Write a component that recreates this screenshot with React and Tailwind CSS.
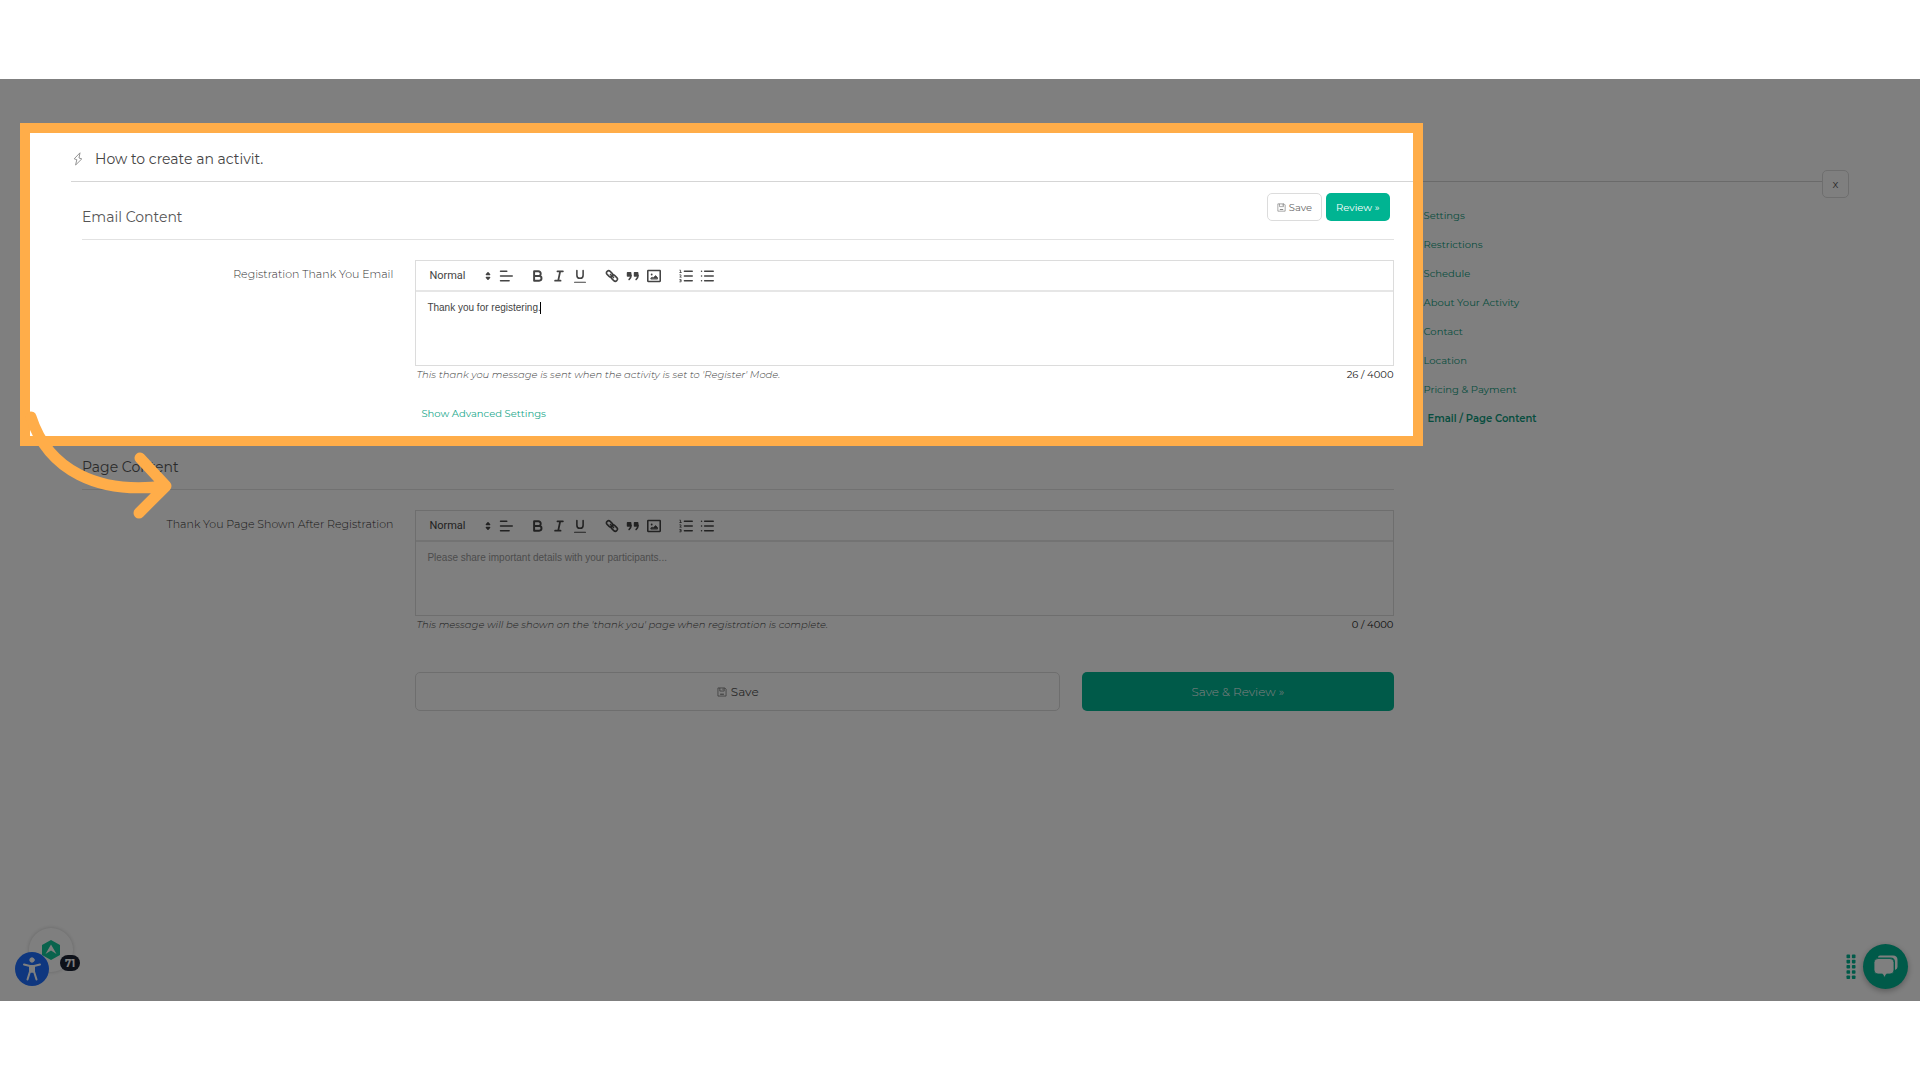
function FloppyIcon({ className }) {
  return (
    <svg viewBox="0 0 16 16" className={className} fill="none" stroke="currentColor" strokeWidth="1" aria-hidden="true">
      <path d="M1.5 1.5h11l2 2v11h-13z" />
      <path d="M4.5 1.5v5h7v-5M9.5 2.5v2" />
      <path d="M5 11.5h6" strokeWidth="1.4" />
    </svg>
  )
}

function BoltIcon() {
  return (
    <svg viewBox="0 0 12 14" className="h-3.5 w-3" fill="none" stroke="#888" strokeWidth="0.9" strokeLinejoin="round" aria-hidden="true">
      <path d="M8 .8 2.2 6.8l2.6.9L3.6 13 9.8 6.9 7 6z" />
    </svg>
  )
}

function Tool({ label, wide, children }) {
  return (
    <button type="button" aria-label={label} className={wide ? 'mr-[11px] flex h-6 w-[21px] items-center justify-center' : 'flex h-6 w-[21px] items-center justify-center'}>
      <svg viewBox="0 0 18 18" className="size-[14px]" fill="none" stroke="#444" strokeWidth="2" strokeLinecap="round" strokeLinejoin="round" aria-hidden="true">
        {children}
      </svg>
    </button>
  )
}

function Toolbar() {
  return (
    <div className="flex h-[31px] items-center border-b-2 border-[#e6e6e6] pl-[13px]">
      <div className="relative mr-1 flex w-[62px] items-center">
        <select aria-label="Text style" className="h-5 w-full appearance-none bg-transparent font-['Roboto','Liberation_Sans',sans-serif] text-[11px] leading-5 text-[#444] outline-none">
          <option>Normal</option>
        </select>
        <svg viewBox="0 0 18 18" className="pointer-events-none absolute -right-1 size-[14px]" fill="#444" stroke="#444" strokeWidth="2" strokeLinejoin="round" aria-hidden="true">
          <path d="M7 11l2 2 2-2zM7 7l2-2 2 2z" />
        </svg>
      </div>
      <Tool label="Align" wide>
        <path d="M2 9h15M2 15h11M2 3h8" />
      </Tool>
      <Tool label="Bold">
        <g strokeWidth="2.5">
          <path d="M4 3h5.500A3 3 0 0 1 12.500 6 3 3 0 0 1 9.500 9H4zM4 9h6.500A3 3 0 0 1 13.500 12 3 3 0 0 1 10.500 15H4z" />
        </g>
      </Tool>
      <Tool label="Italic">
        <path d="M7 3h7M4 15h7M8 15l2.500-12" strokeWidth="2.300" />
      </Tool>
      <Tool label="Underline" wide>
        <path d="M5 2v6a4 4 0 0 0 8 0V2" />
        <path d="M2 17h14" strokeWidth="1.500" />
      </Tool>
      <Tool label="Link">
        <rect x="1.500" y="3.500" width="9" height="5.500" rx="2.700" transform="rotate(45 6 6.200)" />
        <rect x="7.500" y="9" width="9" height="5.500" rx="2.700" transform="rotate(45 12 11.700)" />
        <path d="M7 7l4 4" />
      </Tool>
      <Tool label="Quote">
        <path d="M2 5h4v4H2zM11 5h4v4h-4z" fill="#444" />
        <path d="M6.500 8c0 3-.8 4.500-2.500 5.500M15.500 8c0 3-.8 4.500-2.500 5.500" />
      </Tool>
      <Tool label="Image" wide>
        <rect x="1" y="2" width="16" height="14" rx="0.500" />
        <circle cx="6" cy="7" r="1.200" fill="#444" stroke="none" />
        <path d="M5 12.500v-1l2-1 1 1 3-3 2.500 2.500v1.500z" fill="#444" strokeWidth="1" />
      </Tool>
      <Tool label="Numbered list">
        <path d="M7 3h10M7 9h10M7 15h10" />
        <path d="M1 1.500h1v3M1 4.500h2M1 7.500h1.500v1.300L1 10.500h2M1 13.500h1.700v3H1M1.500 15h1" strokeWidth="1" />
      </Tool>
      <Tool label="Bullet list">
        <path d="M6 3h11M6 9h11M6 15h11M2 3h.01M2 9h.01M2 15h.01" />
      </Tool>
    </div>
  )
}

function Section({ title, label, id, placeholder, defaultValue, caret, help, count }) {
  return (
    <div>
      <h2 className="mx-[11px] border-b border-[#e2e2e2] pt-[25px] pb-3 text-[14px] leading-5 text-[#555]">{title}</h2>
      <div className="flex pt-5">
        <label htmlFor={id} className="w-1/4 px-[11px] pt-1.5 text-right text-[11px] leading-4 font-light text-[#333]">{label}</label>
        <div className="w-3/4 px-[11px]">
          <div className="border border-[#dcdcdc]">
            <Toolbar />
            <div className="relative">
              <textarea id={id} rows="3" placeholder={placeholder} defaultValue={defaultValue} className="block h-[73px] w-full resize-none bg-transparent px-[11px] py-2 font-['Liberation_Sans',sans-serif] text-[10px] leading-4 text-[#444] outline-none placeholder:text-[#999]" />
              {caret && <span className="absolute top-[10px] left-[124px] h-3 w-px bg-black" />}
            </div>
          </div>
          <div className="flex justify-between pl-px text-[10px] leading-[18px]">
            <em className="font-light text-[#444]">{help}</em>
            <span className="text-[#222]">{count}</span>
          </div>
        </div>
      </div>
    </div>
  )
}

const LINKS = ['Settings', 'Restrictions', 'Schedule', 'About Your Activity', 'Contact', 'Location', 'Pricing & Payment']

export default function App() {
  return (
    <div className="flex min-h-screen flex-col bg-white py-[79px] font-['Montserrat','Inter',sans-serif]">
      <div className="relative grow overflow-hidden bg-white px-[71px]">
        <header className="flex items-start">
          <div className="flex grow items-center gap-[11px] border-b border-[#d5d5d5] pt-[70px] pb-3 pl-px">
            <BoltIcon />
            <h1 className="text-[14px] leading-5 text-[#444]">How to create an activit.</h1>
          </div>
          <button type="button" aria-label="Close" className="mt-[91px] -mb-4 h-7 w-[27px] rounded-[5px] border border-[#dcdcdc] text-[11px] text-[#555]">x</button>
        </header>

        <div className="flex">
          <main className="w-3/4">
            <div className="relative pb-6">
              <Section title="Email Content" label="Registration Thank You Email" id="email" defaultValue="Thank you for registering." caret help="This thank you message is sent when the activity is set to 'Register' Mode." count="26 / 4000" />
              <div className="absolute top-[11px] right-[15px] flex gap-1 text-[10px]">
                <button type="button" className="flex h-7 items-center gap-[3px] rounded-[5px] border border-[#dcdcdc] px-[9px] text-[#666]">
                  <FloppyIcon className="size-[9px]" />
                  Save
                </button>
                <button type="button" className="h-7 rounded-[5px] bg-[#00b492] px-2.5 text-white">Review »</button>
              </div>
              <div className="flex justify-end pt-[22px]">
                <div className="w-3/4 px-[17px] text-[10px] leading-4">
                  <a href="#advanced" className="text-[#1aa88c]">Show Advanced Settings</a>
                </div>
              </div>

              <div className="pointer-events-none absolute -top-[59px] -right-[18px] bottom-0 -left-[51px] z-20 border-10 border-[#ffad49] shadow-[0_0_0_4000px_rgba(0,0,0,0.5)]">
                <svg viewBox="0 0 152 114" className="absolute -bottom-[84px] -left-[10px] h-[114px] w-[152px]" fill="none" stroke="#ffad49" strokeWidth="11" strokeLinecap="round" strokeLinejoin="round" aria-hidden="true">
                  <path d="M11 11C28 64 78 89 145 80M120 52l26 28-27 27" />
                </svg>
              </div>
            </div>

            <div className="-mt-[14px]">
              <Section title="Page Content" label="Thank You Page Shown After Registration" id="page" placeholder="Please share important details with your participants..." help="This message will be shown on the 'thank you' page when registration is complete." count="0 / 4000" />
            </div>

            <div className="flex justify-end pt-[38px]">
              <div className="flex w-3/4 text-[12px]">
                <div className="w-2/3 px-[11px]">
                  <button type="button" className="flex h-[39px] w-full items-center justify-center gap-1 rounded-[5px] border border-[#dcdcdc] text-[#555]">
                    <FloppyIcon className="size-2.5" />
                    Save
                  </button>
                </div>
                <div className="w-1/3 px-[11px]">
                  <button type="button" className="h-[39px] w-full rounded-[5px] bg-[#00b492] font-light text-white">Save &amp; Review »</button>
                </div>
              </div>
            </div>
          </main>

          <nav className="flex w-1/4 flex-col gap-[9px] pt-6 pl-[19px] text-[10px] leading-5 text-[#0f9c80]">
            {LINKS.map((name) => (
              <a key={name} href="#section">{name}</a>
            ))}
            <a href="#content" className="pl-1 font-semibold">Email / Page Content</a>
          </nav>
        </div>

        <div className="absolute bottom-[15px] left-[15px] h-[58px] w-[65px]">
          <div className="absolute top-0 left-[14px] flex size-11 items-center justify-center rounded-full bg-white shadow-[0_0_4px_rgba(0,0,0,0.2)]">
            <svg viewBox="0 0 18 20" className="h-5 w-[18px]" aria-hidden="true">
              <path d="M9 0l9 5v10l-9 5-9-5V5z" fill="#13c79a" />
              <path d="M9 4.500l5.500 9.500-5.500-3.500-5.500 3.500z" fill="#fff" />
            </svg>
          </div>
          <button type="button" aria-label="Accessibility" className="absolute bottom-0 left-0 flex size-[34px] items-center justify-center rounded-full bg-[#1e6fff]">
            <svg viewBox="0 0 24 24" className="size-6" fill="#fff" stroke="#fff" strokeLinecap="round" strokeLinejoin="round" aria-hidden="true">
              <circle cx="12" cy="3" r="2.200" />
              <path d="M4 7.500l6 1.500h4l6-1.500" fill="none" strokeWidth="2" />
              <path d="M10 9.500h4v5l2.500 8M10 9.500v5l-2.500 8M10.500 14.500h3" fill="none" strokeWidth="2" />
              <path d="M10 9h4v6h-4z" />
            </svg>
          </button>
          <span className="absolute right-0 bottom-[15px] flex h-4 w-5 items-center justify-center rounded-full bg-[#1b2233] text-[10px] font-bold text-white">71</span>
        </div>

        <div className="absolute right-3 bottom-3 flex items-center gap-[7px]">
          <svg viewBox="0 0 10 26" className="h-[26px] w-2.5" fill="#00b492" aria-hidden="true">
            {[0, 5.2, 10.4, 15.6, 20.8].map((y) => (
              <g key={y}>
                <rect x="0.500" y={y + 0.6} width="3.600" height="3.600" rx="0.800" />
                <rect x="5.900" y={y + 0.6} width="3.600" height="3.600" rx="0.800" />
              </g>
            ))}
          </svg>
          <button type="button" aria-label="Open chat" className="flex size-[45px] items-center justify-center rounded-full bg-[#00b492] shadow-[0_2px_6px_rgba(0,0,0,0.3)]">
            <svg viewBox="0 0 24 23" className="h-[23px] w-6" aria-hidden="true">
              <path d="M6 .5h13q4.500 0 4.500 4.500v7q0 2-2.500 3V7q0-4.500-4.500-4.500H4q0-2 2-2z" fill="#fff" />
              <path d="M4 3.500h12q4 0 4 4V15q0 4-4 4h-3.500l-2 3.500-2-3.500H4q-4 0-4-4V7.500q0-4 4-4z" fill="#fff" stroke="#00b492" strokeWidth="0.800" />
            </svg>
          </button>
        </div>
      </div>
    </div>
  )
}
